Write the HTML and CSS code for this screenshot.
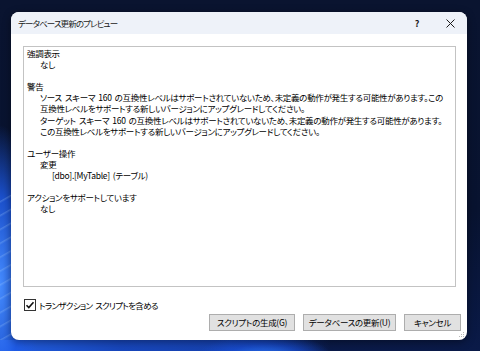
FILE: index.html
```html
<!DOCTYPE html>
<html lang="ja">
<head>
<meta charset="utf-8">
<link rel="stylesheet" href="styles.css">
</head>
<body>
<div class="desktop">
  <div class="dialog">
    <div class="titlebar">
      <span class="title">データベース更新のプレビュー</span>
      <span class="help">?</span>
      <span class="close">
        <svg width="9" height="9" viewBox="0 0 9 9"><path d="M0.5 0.5L8.5 8.5M8.5 0.5L0.5 8.5" stroke="#1a1a1a" stroke-width="1"/></svg>
      </span>
    </div>
    <div class="body">
      <div class="panel">
        <div class="l0">強調表示</div>
        <div class="l1">なし</div>
        <div class="blank"></div>
        <div class="l0">警告</div>
        <div class="l1">ソース スキーマ 160 の互換性レベルはサポートされていないため、未定義の動作が発生する可能性があります。この</div>
        <div class="l1">互換性レベルをサポートする新しいバージョンにアップグレードしてください。</div>
        <div class="l1">ターゲット スキーマ 160 の互換性レベルはサポートされていないため、未定義の動作が発生する可能性があります。</div>
        <div class="l1">この互換性レベルをサポートする新しいバージョンにアップグレードしてください。</div>
        <div class="blank"></div>
        <div class="l0">ユーザー操作</div>
        <div class="l1">変更</div>
        <div class="l2">[dbo].[MyTable] (テーブル)</div>
        <div class="blank"></div>
        <div class="l0">アクションをサポートしています</div>
        <div class="l1">なし</div>
      </div>
      <label class="check">
        <span class="box">
          <svg width="12" height="12" viewBox="0 0 12 12"><rect x="0.5" y="0.5" width="11" height="11" fill="#fff" stroke="#333"/><path d="M2.5 6.2L4.8 8.5L9.5 3.2" fill="none" stroke="#111" stroke-width="1.6"/></svg>
        </span>
        <span class="check-label">トランザクション スクリプトを含める</span>
      </label>
      <div class="buttons">
        <button class="btn b1">スクリプトの生成(G)</button>
        <button class="btn b2">データベースの更新(U)</button>
        <button class="btn b3">キャンセル</button>
      </div>
    </div>
    <svg class="grip" width="6" height="6" viewBox="0 0 6 6"><g fill="#b8b8b8"><rect x="4" y="0" width="1" height="1"/><rect x="2" y="2" width="1" height="1"/><rect x="4" y="2" width="1" height="1"/><rect x="0" y="4" width="1" height="1"/><rect x="2" y="4" width="1" height="1"/><rect x="4" y="4" width="1" height="1"/></g></svg>
  </div>
</div>
</body>
</html>
```

FILE: styles.css
```css
* { box-sizing: border-box; }
html, body { margin: 0; padding: 0; }
body {
  width: 480px;
  height: 351px;
  overflow: hidden;
  font-family: "Noto Sans CJK JP", "Noto Sans", sans-serif;
  font-feature-settings: "palt";
}
.desktop {
  width: 480px;
  height: 351px;
  padding: 12px 0 0 11px;
  background:
    repeating-linear-gradient(150deg, rgba(255,255,255,0) 0px, rgba(255,255,255,0) 9px, rgba(170,210,255,0.25) 10px, rgba(255,255,255,0) 12px) 0 190px / 11px 150px no-repeat,
    radial-gradient(ellipse 40px 160px at 0px 285px, rgba(70,140,255,1), rgba(30,90,230,0.85) 55%, rgba(0,0,0,0) 100%),
    radial-gradient(ellipse 70px 30px at 265px 362px, rgba(50,130,255,1), rgba(25,80,220,0.6) 60%, rgba(0,0,0,0) 100%),
    linear-gradient(90deg, rgba(35,95,225,1) 0px, rgba(25,75,200,0.9) 120px, rgba(25,75,200,0.8) 230px, rgba(0,0,0,0) 330px) 0 340px / 480px 11px no-repeat,
    linear-gradient(180deg, #0a1430 0%, #081330 60%, #0a1a48 100%);
}
.dialog {
  position: relative;
  width: 456px;
  height: 328px;
  background: #ffffff;
  border-radius: 8px;
  overflow: hidden;
  box-shadow: 0 2px 8px rgba(0,0,0,0.4);
}
.titlebar {
  height: 22px;
  background: #eef2f9;
  display: flex;
  align-items: center;
  padding-left: 7px;
  font-size: 8.5px;
  color: #1a1a1a;
}
.title { flex: 1; letter-spacing: -0.9px; }
.help {
  width: 10px;
  text-align: center;
  font-size: 9px;
  font-weight: bold;
  margin-right: 24px;
}
.close {
  width: 9px;
  height: 9px;
  display: flex;
  margin-right: 12px;
}
.body {
  padding: 12px 0 0 12px;
}
.panel {
  width: 433px;
  height: 241px;
  border: 1px solid #c3c3c3;
  background: #fff;
  padding: 1px 0 0 3px;
  font-size: 8.5px;
  letter-spacing: -0.3px;
  word-spacing: 1.5px;
  line-height: 11.1px;
  color: #000;
  white-space: nowrap;
}
.blank { height: 11.1px; }
.l1 { padding-left: 13px; }
.l2 { padding-left: 25px; }
.check {
  display: flex;
  align-items: center;
  gap: 3px;
  margin: 11px 0 0 1px;
  font-size: 8.5px;
  color: #000;
  height: 14px;
}
.check-label { letter-spacing: -0.7px; word-spacing: 1.5px; }
.box { display: flex; }
.buttons {
  display: flex;
  margin-top: 2px;
  padding-left: 186px;
}
.btn {
  height: 17px;
  padding: 0;
  border: 1px solid #adadad;
  background: #e1e1e1;
  font-family: inherit;
  font-feature-settings: "palt";
  font-size: 8.5px;
  letter-spacing: -0.3px;
  white-space: nowrap;
  color: #000;
  line-height: 15px;
}
.b1 { width: 86px; margin-right: 8px; }
.b2 { width: 93px; margin-right: 8px; }
.b3 { width: 57px; }
.grip {
  position: absolute;
  right: 2px;
  bottom: 2px;
}
```
